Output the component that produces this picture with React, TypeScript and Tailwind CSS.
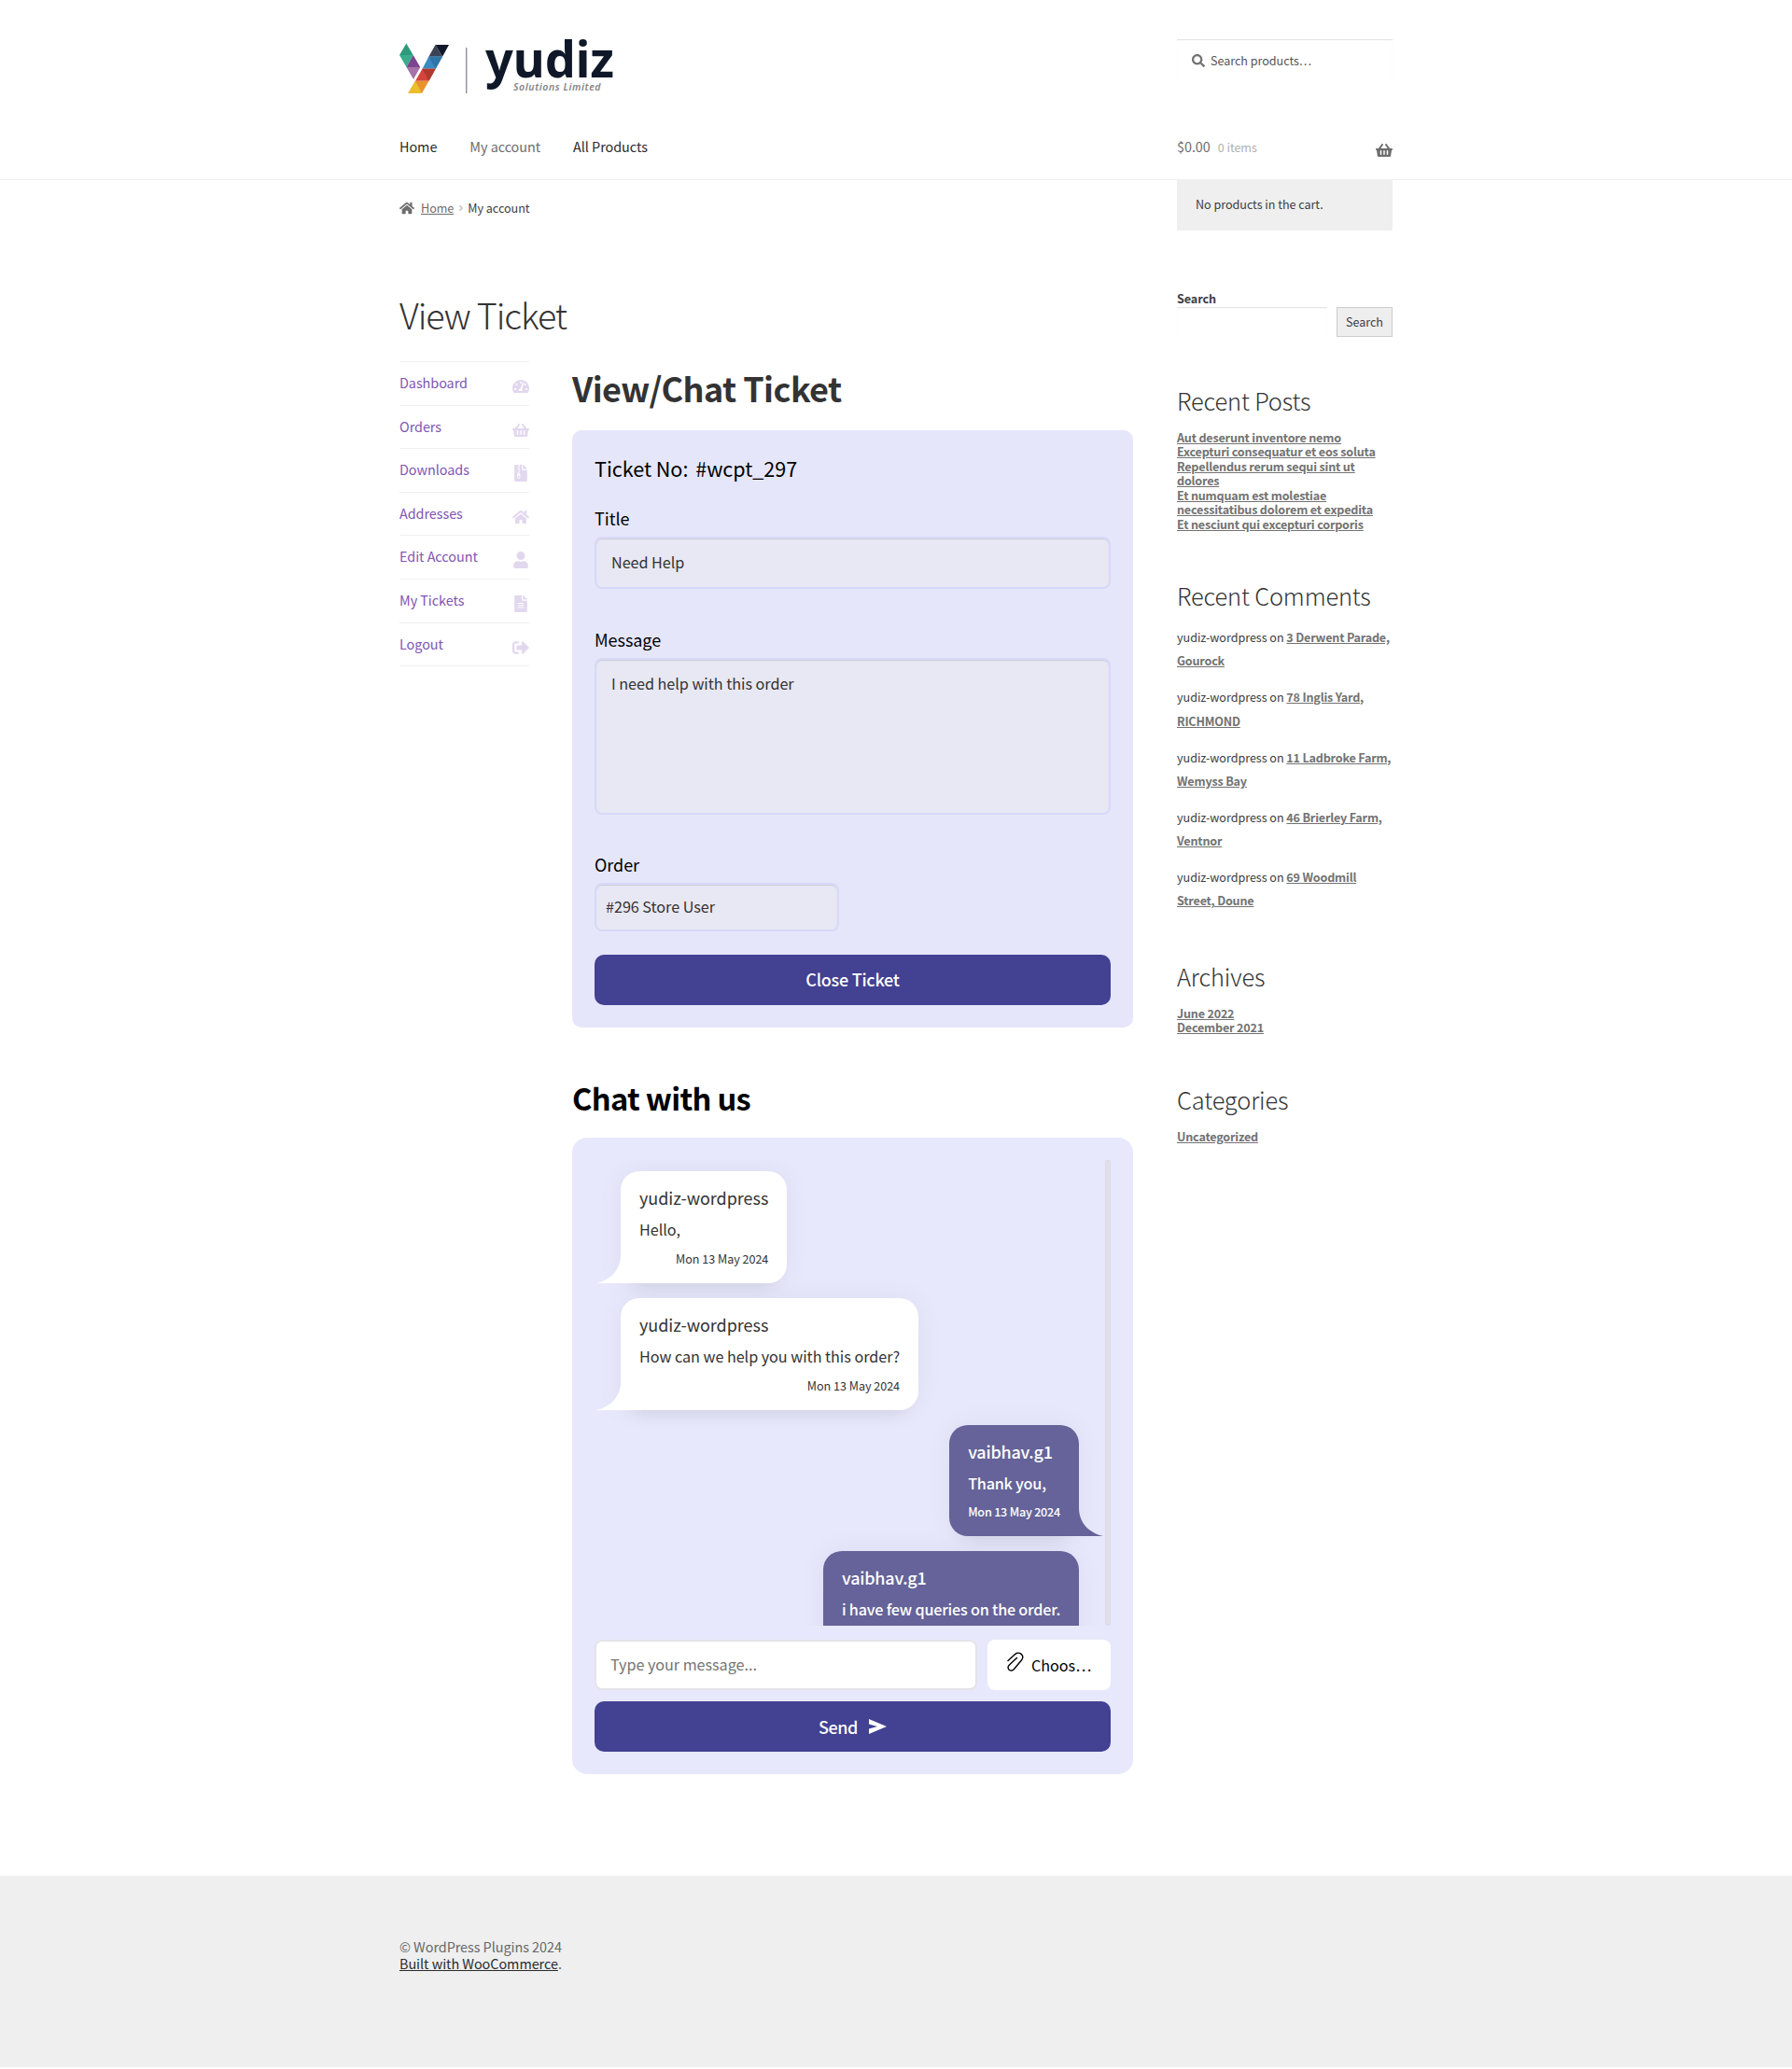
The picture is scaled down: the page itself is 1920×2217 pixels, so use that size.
import type { ReactNode } from "react";
import {
  FaAngleRight,
  FaFileAlt,
  FaFileArchive,
  FaHome,
  FaSearch,
  FaShoppingBasket,
  FaSignOutAlt,
  FaTachometerAlt,
  FaUser,
} from "react-icons/fa";

function Logo() {
  return (
    <svg className="overflow-visible" width="230" height="60" viewBox="0 0 230 60" aria-label="yudiz Solutions Limited">
      <polygon points="7.3,5.5 0,18 14.7,18" fill="#2f9a7b" />
      <polygon points="0,18 14.7,18 7.5,31" fill="#37ad8b" />
      <polygon points="14.7,18 22.3,31 7.5,31" fill="#7c458f" />
      <polygon points="7.5,31 22.3,31 15,44" fill="#a673a9" />
      <polygon points="38.5,7 53,7 46,19.7" fill="#10182a" />
      <polygon points="38.5,7 46,19.7 31.3,19.7" fill="#3a4256" />
      <polygon points="31.3,19.7 46,19.7 38.7,32.7 24.5,32.7" fill="#3b8ac1" />
      <polygon points="46,19.7 38.7,32.7 31.3,19.7" fill="#2f75aa" />
      <polygon points="24.5,32.7 38.7,32.7 31.5,45.7 17,45.7" fill="#d5453b" />
      <polygon points="24.5,32.7 38.7,32.7 31.5,45.7" fill="#b0382f" />
      <polygon points="17,45.7 31.5,45.7 24,59 9.3,59" fill="#e9922f" />
      <polygon points="17,45.7 24,59 9.3,59" fill="#eabf2c" />
      <rect x="71" y="10" width="1.4" height="49" fill="#8b92a0" />
      <text x="92" y="42" textLength="138" lengthAdjust="spacingAndGlyphs" fontFamily="Noto Sans" fontWeight="700" fontSize="53.5" letterSpacing="0" fill="#0f1828">
        yudiz
      </text>
      <text x="122" y="56" textLength="93.5" fontFamily="Noto Sans" fontWeight="600" fontStyle="italic" fontSize="10.5" fill="#858587">
        Solutions Limited
      </text>
    </svg>
  );
}

const accountLinks = [
  { label: "Dashboard", Icon: FaTachometerAlt },
  { label: "Orders", Icon: FaShoppingBasket },
  { label: "Downloads", Icon: FaFileArchive },
  { label: "Addresses", Icon: FaHome },
  { label: "Edit Account", Icon: FaUser },
  { label: "My Tickets", Icon: FaFileAlt },
  { label: "Logout", Icon: FaSignOutAlt },
];

const comments = [
  ["3 Derwent Parade,", "Gourock"],
  ["78 Inglis Yard,", "RICHMOND"],
  ["11 Ladbroke Farm,", "Wemyss Bay"],
  ["46 Brierley Farm,", "Ventnor"],
  ["69 Woodmill", "Street, Doune"],
];

function SideTitle({ children }: { children: ReactNode }) {
  return <h2 className="text-[25.4px] font-light leading-9 tracking-[-0.15px] text-[#333333]">{children}</h2>;
}

function SideLinks({ lines }: { lines: string[] }) {
  return (
    <ul className="mt-3.5 text-[12.6px] font-bold leading-[15.43px] tracking-[-0.2px] text-[#727272]">
      {lines.map((line) => (
        <li key={line} className="whitespace-nowrap underline">{line}</li>
      ))}
    </ul>
  );
}

function Label({ children }: { children: ReactNode }) {
  return <div className="text-lg leading-6 text-black">{children}</div>;
}

function Bubble({ name, text, mine }: { name: string; text: string; mine?: boolean }) {
  return (
    <div
      className={
        mine
          ? "relative mr-[28px] self-end rounded-[20px] rounded-br-none bg-[#656399] px-5 py-4 font-medium tracking-[-0.22px] text-white shadow-[0_0_30px_rgba(0,0,0,0.05),0_15px_20px_-15px_rgba(0,0,0,0.1)]"
          : "relative ml-[28px] self-start rounded-[20px] rounded-bl-none bg-white px-5 py-4 text-[#333333] shadow-[0_0_30px_rgba(0,0,0,0.05),0_15px_20px_-15px_rgba(0,0,0,0.1)]"
      }
    >
      <div className="text-lg leading-6">{name}</div>
      <div className={mine ? "mt-[9.5px] text-[16.2px] leading-6" : "mt-2.5 text-[16.2px] leading-6"}>{text}</div>
      <div className={mine ? "mt-[9.5px] text-right text-[12.6px] leading-5" : "mt-2.5 text-right text-[12.6px] leading-5"}>Mon 13 May 2024</div>
      {mine ? (
        <svg className="absolute bottom-0 left-full" width="26" height="30" viewBox="0 0 26 30">
          <path d="M0 0C0 14 9 26 26 30H0Z" fill="#656399" />
        </svg>
      ) : (
        <svg className="absolute bottom-0 right-full" width="26" height="30" viewBox="0 0 26 30">
          <path d="M26 0C26 14 17 26 0 30H26Z" fill="#ffffff" />
        </svg>
      )}
    </div>
  );
}

export default function App() {
  return (
    <div className="min-h-[2217px] w-[1920px] bg-white font-['Noto_Sans_CJK_SC',sans-serif] text-[14.4px] tracking-[-0.04px] text-[#3b3d43]">
      <header className="h-[193px] border-b border-[#f0f0f0] pt-[41px]">
        <div className="mx-auto w-[1064px]">
          <div className="flex h-[60px] justify-between">
            <Logo />
            <div className="mt-px flex h-[46px] w-[231px] items-center bg-white pl-4 shadow-[inset_0_1px_1px_rgba(0,0,0,0.125)]">
              <FaSearch className="size-3.5 text-[#727272]" />
              <span className="ml-1.5 text-[12.6px] leading-5 text-[#555555]">Search products…</span>
            </div>
          </div>
          <div className="mt-[44px] flex h-6 justify-between leading-6">
            <nav className="flex gap-[35px] text-[#2b2b2b]">
              <a>Home</a>
              <a className="text-[#6d6d6d]">My account</a>
              <a>All Products</a>
            </nav>
            <div className="flex w-[231px] items-center">
              <span className="text-[#6d6d6d]">$0.00</span>
              <span className="ml-2 mt-px text-[12.6px] text-[#b0b0b0]">0 items</span>
              <FaShoppingBasket className="ml-auto mt-2 h-4 w-[18px] text-[#6d6d6d]" />
            </div>
          </div>
        </div>
      </header>

      <div className="mx-auto flex w-[1064px] items-start justify-between">
        <main className="w-[786px]">
          <div className="mt-5 flex h-5 items-center text-[12.6px] leading-5">
            <FaHome className="size-4 text-[#6d6d6d]" />
            <a className="ml-[7px] text-[#6d6d6d] underline">Home</a>
            <FaAngleRight className="ml-[2.5px] mr-[2.5px] size-[10px] text-[#c4c4c4]" />
            <span>My account</span>
          </div>
          <h1 className="mt-[80px] text-[37.7px] font-light leading-[48px] tracking-[-1.1px] text-[#333333]">View Ticket</h1>

          <div className="mt-[26px] flex items-start gap-[46px]">
            <nav className="w-[139px] border-b border-[#f0f0f0]">
              {accountLinks.map(({ label, Icon }) => (
                <a key={label} className="flex h-[46.6px] items-start justify-between border-t border-[#f0f0f0] pt-2.5 leading-6 text-[#7f54b3]">
                  {label}
                  <Icon className="mt-[7px] size-[18px] text-[#e2d8ee]" />
                </a>
              ))}
            </nav>

            <div className="w-[601px]">
              <h2 className="mt-1.5 text-[36px] font-bold leading-[44px] tracking-[-0.58px] text-[#333333]">View/Chat Ticket</h2>
              <section className="mt-6 h-[640px] rounded-[10px] bg-[#e6e6fa] p-6">
                <div className="pt-px text-[21.6px] leading-8 text-black">
                  Ticket No: <span className="ml-[3px]">#wcpt_297</span>
                </div>
                <div className="mt-[25px]">
                  <Label>Title</Label>
                  <div className="mt-2 h-14 rounded-lg border-2 border-[#d8d8fa] bg-[#e8e8f4] px-4 py-[13px] text-[16.2px] leading-6 text-[#333333] shadow-[inset_0_1px_1px_rgba(0,0,0,0.125)]">
                    Need Help
                  </div>
                </div>
                <div className="mt-[42px]">
                  <Label>Message</Label>
                  <div className="mt-2 h-[168px] rounded-lg border-2 border-[#d8d8fa] bg-[#e8e8f4] px-4 py-[13px] text-[16.2px] leading-6 text-[#333333] shadow-[inset_0_1px_1px_rgba(0,0,0,0.125)]">
                    I need help with this order
                  </div>
                </div>
                <div className="mt-[41px]">
                  <Label>Order</Label>
                  <div className="mt-2 h-[52px] w-[262px] rounded-lg border-2 border-[#d8d8fa] bg-[#e8e8f4] px-2.5 py-[11px] text-[16.2px] leading-6 text-[#333333] shadow-[inset_0_1px_1px_rgba(0,0,0,0.125)]">
                    #296 Store User
                  </div>
                </div>
                <button className="mt-[25px] block h-[54px] w-full rounded-[10px] bg-[#424192] pb-0.5 text-lg font-medium leading-6 tracking-[-0.26px] text-white">Close Ticket</button>
              </section>

              <h2 className="mt-[53px] text-[32.7px] font-bold leading-[44px] tracking-[-0.7px] text-black">Chat with us</h2>
              <section className="mt-[21px] h-[682px] rounded-2xl bg-[#e8e8fc] p-6">
                <div className="flex h-[499px] overflow-hidden">
                  <div className="flex h-full flex-1 flex-col gap-4 overflow-hidden pt-3">
                    <Bubble name="yudiz-wordpress" text="Hello," />
                    <Bubble name="yudiz-wordpress" text="How can we help you with this order?" />
                    <Bubble mine name="vaibhav.g1" text="Thank you," />
                    <Bubble mine name="vaibhav.g1" text="i have few queries on the order." />
                  </div>
                  <div className="h-full w-1.5 rounded-full bg-[#e0e0ea] shadow-[inset_0_0_2px_rgba(0,0,0,0.08)]" />
                </div>
                <div className="mt-[15px] flex h-[54px] justify-between">
                  <div className="w-[410px] rounded-lg border-2 border-[#e4e4e8] bg-white px-[15px] py-[12px] text-[16.2px] leading-6 text-[#757575]">
                    Type your message...
                  </div>
                  <div className="flex w-[132px] items-start rounded-lg bg-white pl-[21px] text-[16.2px] leading-6 text-black">
                    <svg className="mt-[13px]" width="18" height="22" viewBox="0 0 18 22" fill="none" stroke="#000" strokeWidth="1.4" strokeLinecap="round">
                      <path d="M1 9.5 8.6 2.6C11 .6 14 1 15.6 2.8 17.2 4.600 17 7 15.400 9L7.500 18.500C6 20.200 3.800 20.700 2.200 19.200.8 17.800.8 15.800 2.200 14.200L10.500 6.400" />
                    </svg>
                    <span className="ml-2 mt-[15px]">Choos…</span>
                  </div>
                </div>
                <button className="mt-3 flex h-[54px] w-full items-center justify-center gap-3 rounded-[10px] bg-[#424192] pb-px text-lg font-medium leading-6 tracking-[-0.4px] text-white">
                  Send
                  <svg width="19" height="16" viewBox="0 0 19 16" fill="#fff">
                    <path d="M0 0 19 8 0 16V10.500L9 8 0 5.500Z" />
                  </svg>
                </button>
              </section>
            </div>
          </div>
        </main>

        <aside className="w-[231px] text-[12.6px]">
          <div className="h-[54px] bg-[#efefef] pl-5 pt-4 leading-5">No products in the cart.</div>
          <div className="mt-[63px] font-bold leading-5 tracking-[-0.1px]">Search</div>
          <div className="-mt-px flex h-8 justify-between">
            <div className="w-[161px] bg-white shadow-[inset_0_1px_1px_rgba(0,0,0,0.125)]" />
            <button className="w-[60px] border border-[#cccccc] bg-[#eeeeee] pb-px leading-5">Search</button>
          </div>

          <div className="mt-[50px]">
            <SideTitle>Recent Posts</SideTitle>
            <SideLinks
              lines={[
                "Aut deserunt inventore nemo",
                "Excepturi consequatur et eos soluta",
                "Repellendus rerum sequi sint ut",
                "dolores",
                "Et numquam est molestiae",
                "necessitatibus dolorem et expedita",
                "Et nesciunt qui excepturi corporis",
              ]}
            />
          </div>

          <div className="mt-[51px]">
            <SideTitle>Recent Comments</SideTitle>
            <ul className="mt-3.5 flex flex-col gap-[13.9px] leading-[25.2px]">
              {comments.map(([first, second]) => (
                <li key={first} className="whitespace-nowrap">
                  yudiz-wordpress on{" "}
                  <a className="font-bold tracking-[-0.2px] text-[#727272] underline">
                    {first}
                    <br />
                    {second}
                  </a>
                </li>
              ))}
            </ul>
          </div>

          <div className="mt-[50px]">
            <SideTitle>Archives</SideTitle>
            <SideLinks lines={["June 2022", "December 2021"]} />
          </div>

          <div className="mt-[51px]">
            <SideTitle>Categories</SideTitle>
            <SideLinks lines={["Uncategorized"]} />
          </div>
        </aside>
      </div>

      <footer className="mt-[109px] h-[205px] bg-[#efefef] pt-[67px]">
        <div className="mx-auto w-[1064px] leading-[18px] text-[#686868]">
          <p>© WordPress Plugins 2024</p>
          <p>
            <a className="text-[#2b2b2b] underline">Built with WooCommerce</a>.
          </p>
        </div>
      </footer>
    </div>
  );
}
